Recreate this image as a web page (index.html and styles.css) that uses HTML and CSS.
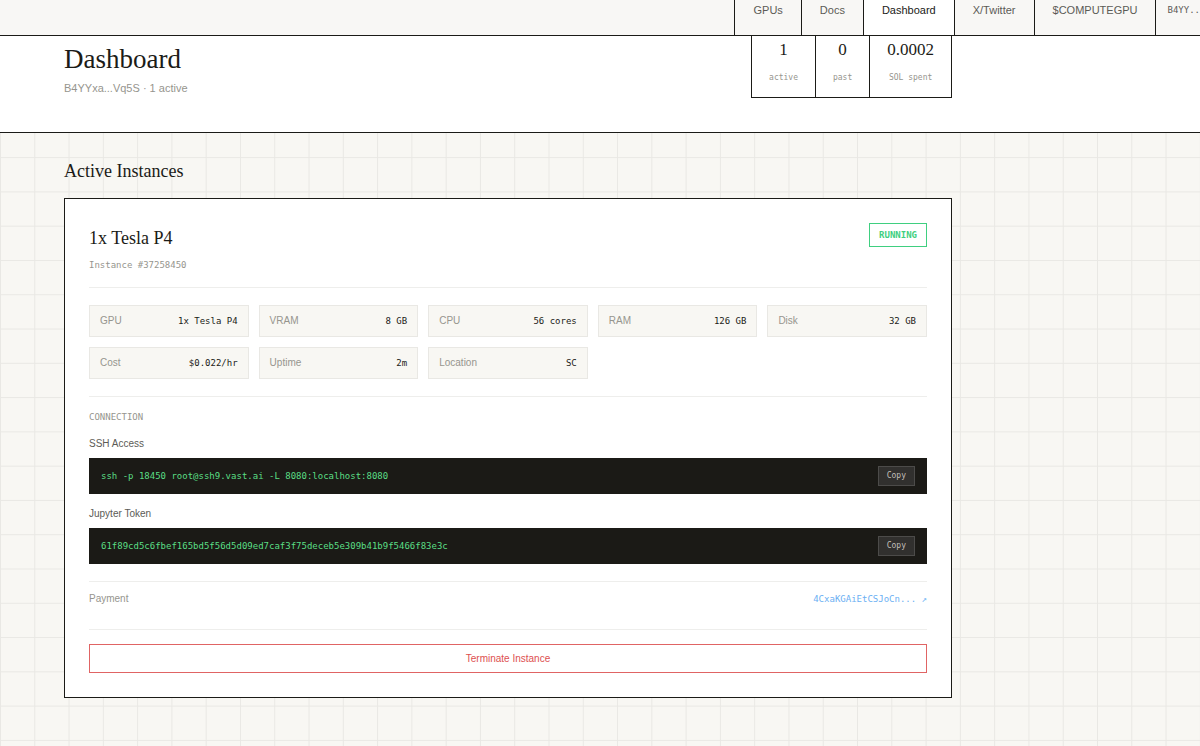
FILE: index.html
```html
<!DOCTYPE html>
<html lang="en">
<head>
<meta charset="utf-8">
<meta name="viewport" content="width=device-width, initial-scale=1">
<title>Dashboard</title>
<link rel="stylesheet" href="styles.css">
</head>
<body>
<nav class="nav">
  <a class="nav-link" href="#gpus">GPUs</a>
  <a class="nav-link" href="#docs">Docs</a>
  <a class="nav-link nav-link-active" href="#dashboard">Dashboard</a>
  <a class="nav-link" href="#twitter">X/Twitter</a>
  <a class="nav-link" href="#token">$COMPUTEGPU</a>
  <a class="nav-link nav-wallet" href="#wallet">B4YY..</a>
</nav>

<header class="page-header">
  <div class="container header-row">
    <div class="header-text">
      <h1 class="page-title">Dashboard</h1>
      <p class="page-subtitle">B4YYxa...Vq5S · 1 active</p>
    </div>
    <div class="stats">
      <div class="stat"><span class="stat-value">1</span><span class="stat-label">active</span></div>
      <div class="stat"><span class="stat-value">0</span><span class="stat-label">past</span></div>
      <div class="stat"><span class="stat-value">0.0002</span><span class="stat-label">SOL spent</span></div>
    </div>
  </div>
</header>

<main class="container content">
  <h2 class="section-title">Active Instances</h2>
  <article class="card">
    <div class="card-head">
      <div>
        <h3 class="card-title">1x Tesla P4</h3>
        <p class="card-id">Instance #37258450</p>
      </div>
      <span class="badge">RUNNING</span>
    </div>

    <dl class="specs">
      <div class="spec"><dt>GPU</dt><dd>1x Tesla P4</dd></div>
      <div class="spec"><dt>VRAM</dt><dd>8 GB</dd></div>
      <div class="spec"><dt>CPU</dt><dd>56 cores</dd></div>
      <div class="spec"><dt>RAM</dt><dd>126 GB</dd></div>
      <div class="spec"><dt>Disk</dt><dd>32 GB</dd></div>
      <div class="spec"><dt>Cost</dt><dd>$0.022/hr</dd></div>
      <div class="spec"><dt>Uptime</dt><dd>2m</dd></div>
      <div class="spec"><dt>Location</dt><dd>SC</dd></div>
    </dl>

    <section class="connection">
      <h4 class="connection-title">CONNECTION</h4>
      <p class="field-label">SSH Access</p>
      <div class="code-row">
        <code class="code">ssh -p 18450 root@ssh9.vast.ai -L 8080:localhost:8080</code>
        <button class="copy" type="button">Copy</button>
      </div>
      <p class="field-label">Jupyter Token</p>
      <div class="code-row">
        <code class="code">61f89cd5c6fbef165bd5f56d5d09ed7caf3f75deceb5e309b41b9f5466f83e3c</code>
        <button class="copy" type="button">Copy</button>
      </div>
    </section>

    <div class="payment">
      <span>Payment</span>
      <a class="payment-link" href="#payment">4CxaKGAiEtCSJoCn... ↗</a>
    </div>

    <div class="actions">
      <button class="terminate" type="button">Terminate Instance</button>
    </div>
  </article>
</main>
</body>
</html>
```

FILE: styles.css
```css
:root {
  --ink: #1b1b17;
  --paper: #f8f7f3;
  --muted: #96958e;
  --text: #5c5b56;
  --rule: #eeeeec;
  --grid-line: #e9e8e4;
  --grid: calc(100vw / 35);
  --sans: "Liberation Sans", Arial, sans-serif;
  --serif: "Liberation Serif", "Times New Roman", serif;
  --mono: "DejaVu Sans Mono", Consolas, monospace;
}

* {
  box-sizing: border-box;
}

body,
h1, h2, h3, h4,
p, dl, dd {
  margin: 0;
}

h1, h2, h3, h4 {
  font-weight: 400;
}

body {
  min-height: 100vh;
  color: var(--ink);
  font-family: var(--sans);
  font-size: 10px;
  line-height: 14px;
  background-color: var(--paper);
  background-image:
    linear-gradient(to right, var(--grid-line) 1px, transparent 1px),
    linear-gradient(to bottom, var(--grid-line) 1px, transparent 1px);
  background-size: var(--grid) var(--grid);
  background-position: 0 20px;
}

.container {
  max-width: 1016px;
  padding: 0 64px;
}

.nav {
  display: flex;
  justify-content: flex-end;
  overflow: hidden;
  background: #f8f7f5;
  border-bottom: 1px solid var(--ink);
}

.nav-link {
  padding: 0 18px 15px;
  border-left: 1px solid var(--ink);
  color: var(--text);
  font-size: 11px;
  line-height: 20px;
  text-decoration: none;
  white-space: nowrap;
}

.nav-link-active {
  background: #fff;
  color: var(--ink);
}

.nav-wallet {
  padding: 0 0 15px 11px;
  font-family: var(--mono);
  font-size: 9px;
}

.page-header {
  background: #fff;
  border-bottom: 1px solid var(--ink);
}

.header-row {
  display: flex;
  justify-content: space-between;
  align-items: flex-start;
  padding-bottom: 34px;
}

.header-text {
  padding-top: 7px;
}

.page-title {
  margin-bottom: 5px;
  font-family: var(--serif);
  font-size: 27px;
  line-height: 32px;
}

.page-subtitle {
  color: var(--muted);
  font-size: 11px;
  line-height: 16px;
}

.stats {
  display: flex;
  border: 1px solid var(--ink);
  border-top: 0;
}

.stat {
  display: flex;
  flex-direction: column;
  gap: 13px;
  padding: 5px 17px 13px;
  text-align: center;
}

.stat + .stat {
  border-left: 1px solid var(--ink);
}

.stat-value {
  font-family: var(--serif);
  font-size: 17px;
  line-height: 18px;
}

.stat-label {
  color: var(--muted);
  font-family: var(--mono);
  font-size: 8px;
  line-height: 12px;
}

.content {
  padding-top: 26px;
  padding-bottom: 48px;
}

.section-title {
  margin-bottom: 15px;
  font-family: var(--serif);
  font-size: 18px;
  line-height: 24px;
}

.card {
  padding: 24px;
  background: #fff;
  border: 1px solid var(--ink);
}

.card-head {
  display: flex;
  justify-content: space-between;
  align-items: flex-start;
  padding-bottom: 15px;
  border-bottom: 1px solid var(--rule);
}

.card-title {
  margin-bottom: 5px;
  font-family: var(--serif);
  font-size: 18px;
  line-height: 30px;
}

.card-id {
  color: var(--muted);
  font-family: var(--mono);
  font-size: 9px;
}

.badge {
  padding: 4px 9px;
  border: 1px solid #3fcf80;
  color: #3fcf80;
  font-family: var(--mono);
  font-size: 9px;
  font-weight: 700;
}

.specs {
  display: grid;
  grid-template-columns: repeat(auto-fill, minmax(140px, 1fr));
  gap: 10px;
  padding: 17px 0;
}

.spec {
  display: flex;
  justify-content: space-between;
  padding: 8px 10px;
  background: var(--paper);
  border: 1px solid #e9e8e4;
}

.spec dt {
  color: var(--muted);
}

.spec dd {
  font-family: var(--mono);
  font-size: 9px;
}

.connection {
  padding: 14px 0 17px;
  border-top: 1px solid var(--rule);
}

.connection-title {
  margin-bottom: 14px;
  color: var(--muted);
  font-family: var(--mono);
  font-size: 9px;
  line-height: 12px;
}

.field-label {
  margin-bottom: 7px;
  color: var(--text);
}

.code-row {
  display: flex;
  justify-content: space-between;
  align-items: center;
  padding: 8px 12px;
  background: #1b1a16;
}

.code-row + .field-label {
  margin-top: 13px;
}

.code {
  color: #5ade85;
  font-family: var(--mono);
  font-size: 9px;
  overflow-wrap: anywhere;
}

.copy {
  padding: 3px 8px;
  background: #31302e;
  border: 1px solid #4c4b49;
  color: #c0bfb9;
  font-family: var(--mono);
  font-size: 8px;
  line-height: 12px;
}

.payment {
  display: flex;
  justify-content: space-between;
  padding: 10px 0 23px;
  border-top: 1px solid var(--rule);
  color: var(--muted);
}

.payment-link {
  color: #6bb0f3;
  font-family: var(--mono);
  font-size: 9px;
  text-decoration: none;
}

.actions {
  padding-top: 14px;
  border-top: 1px solid var(--rule);
}

.terminate {
  display: block;
  width: 100%;
  padding: 7px;
  background: #fff;
  border: 1px solid #e06464;
  color: #dd4f4f;
  font-family: var(--sans);
  font-size: 10px;
  line-height: 13px;
}
```
